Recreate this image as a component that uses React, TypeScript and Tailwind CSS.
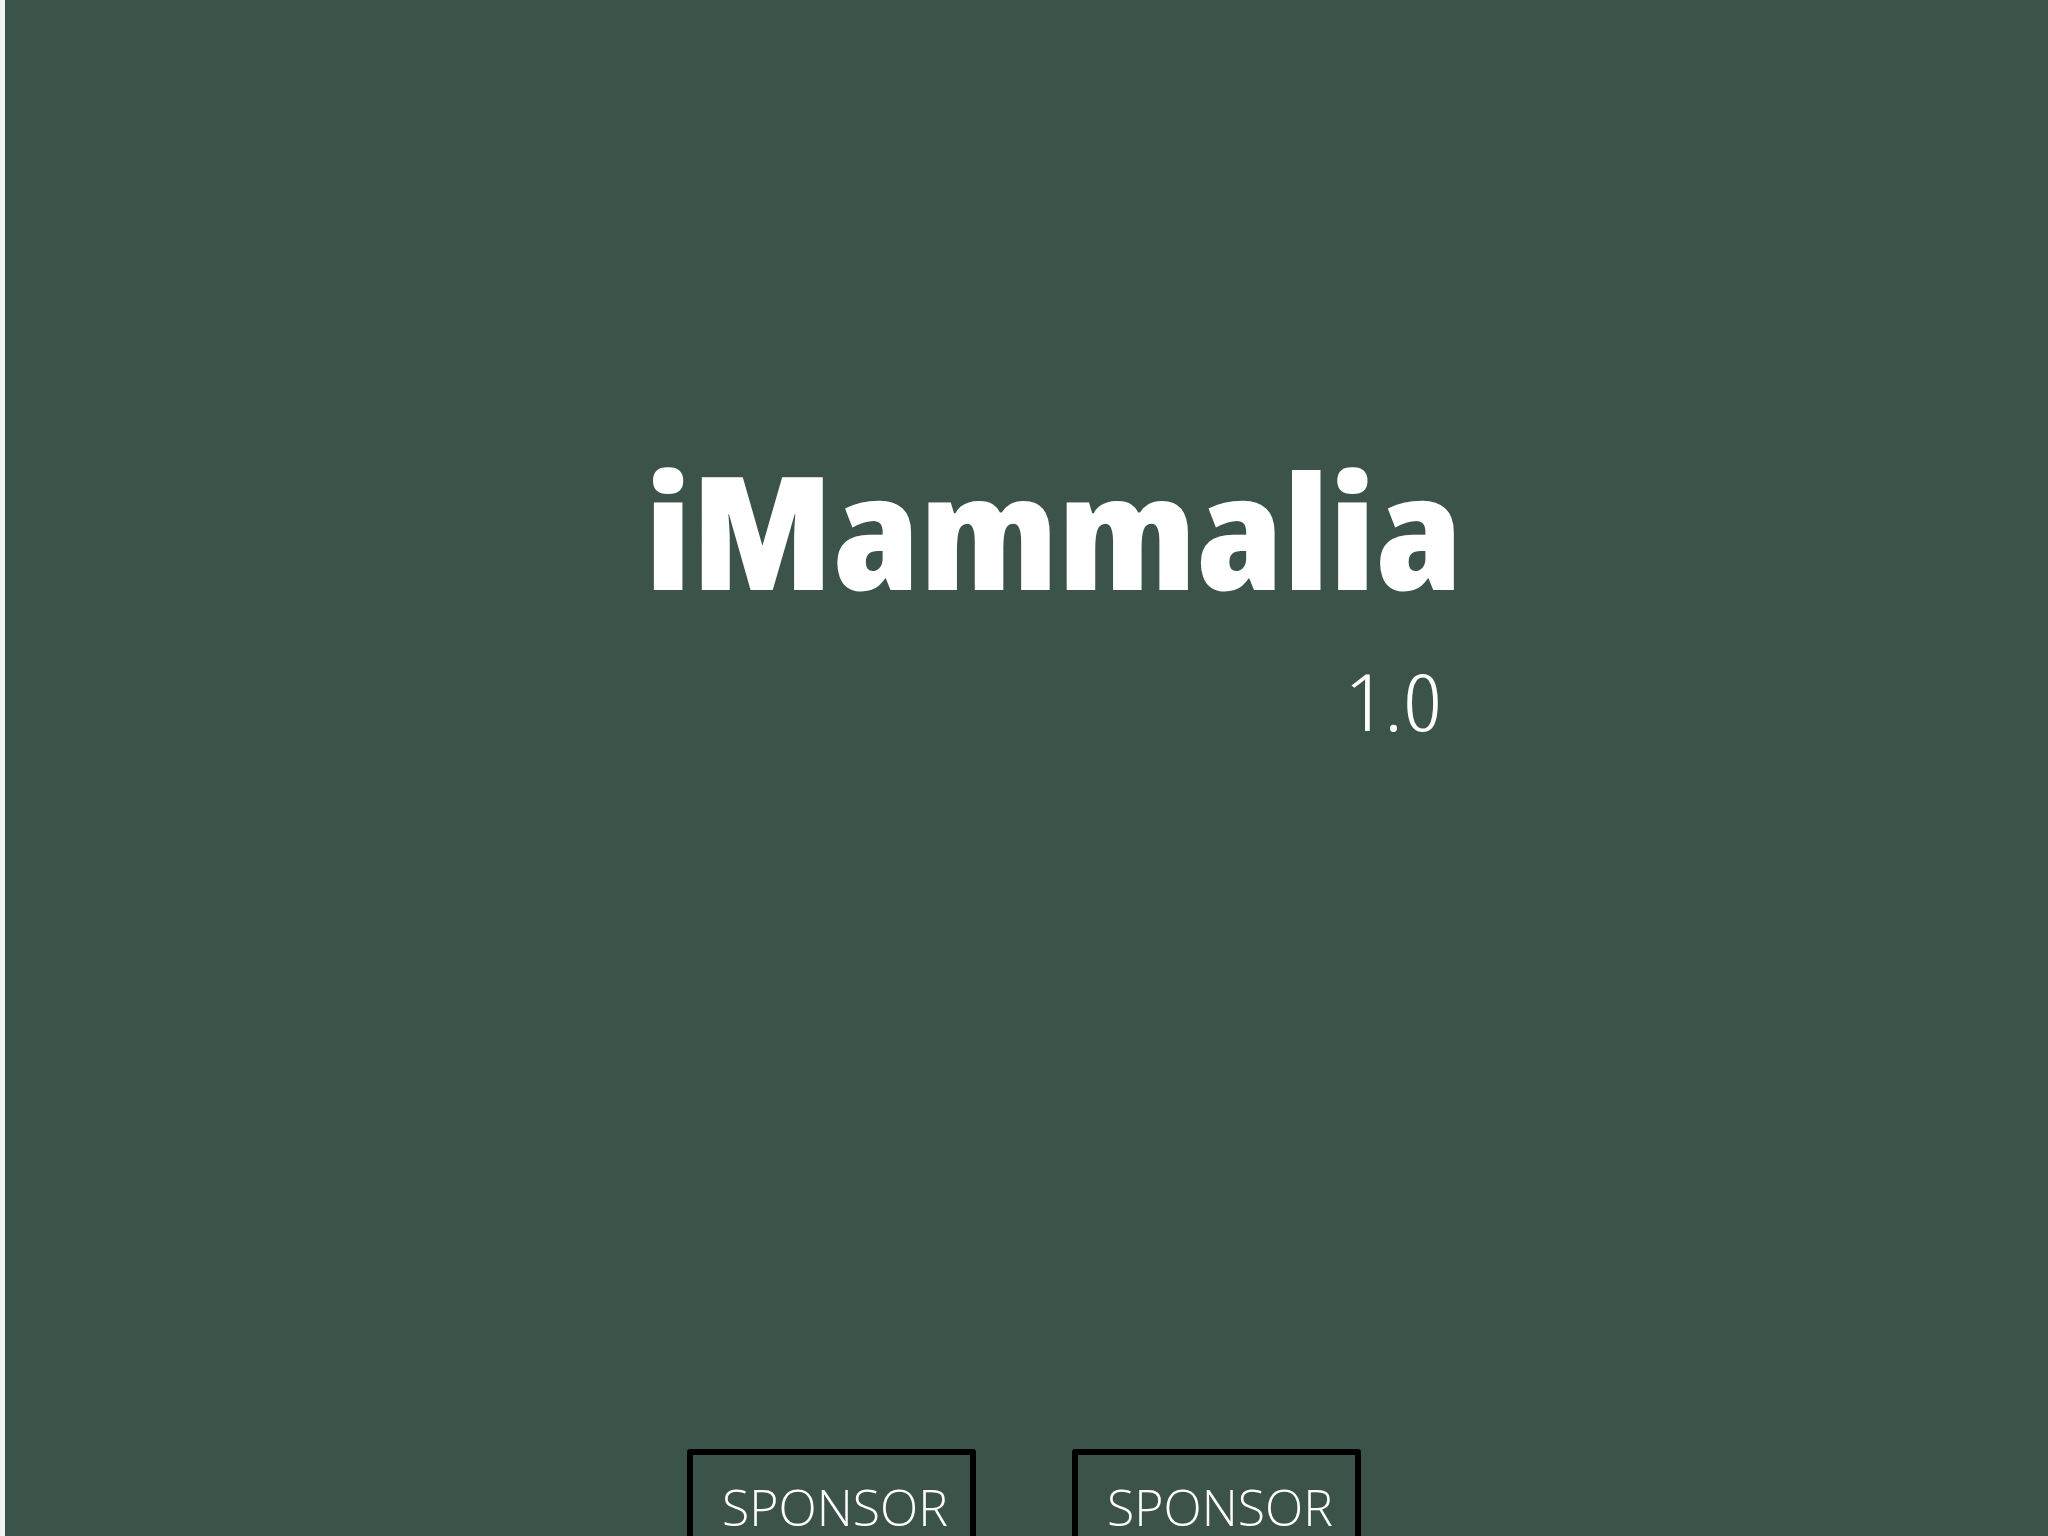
function SponsorBox() {
  return (
    <div className="w-[289px] h-[150px] border-[6px] border-black rounded-[3px] flex justify-center pl-[8px] pt-[27px] shrink-0">
      <span className="text-[50px] leading-none font-light text-white">SPONSOR</span>
    </div>
  );
}

export default function App() {
  return (
    <div className="flex h-screen overflow-hidden bg-[#3c5349] font-['Open_Sans',sans-serif]">
      <div className="w-[5px] bg-[#f2f2f2] shrink-0" />
      <div className="flex-1 flex flex-col">
        <div className="pt-[450px] ml-[640px] flex flex-col w-[797px]">
          <div className="text-[158px] leading-none font-extrabold [font-stretch:75%] text-white whitespace-nowrap origin-left scale-x-[1.11]">
            iMammalia
          </div>
          <div className="mt-[52px] self-end text-[80px] leading-none font-light [font-stretch:75%] text-white origin-right scale-x-[1.2]">
            1.0
          </div>
        </div>
        <div className="mt-[709px] flex justify-center pr-[6px] gap-[96px]">
          <SponsorBox />
          <SponsorBox />
        </div>
      </div>
    </div>
  );
}
